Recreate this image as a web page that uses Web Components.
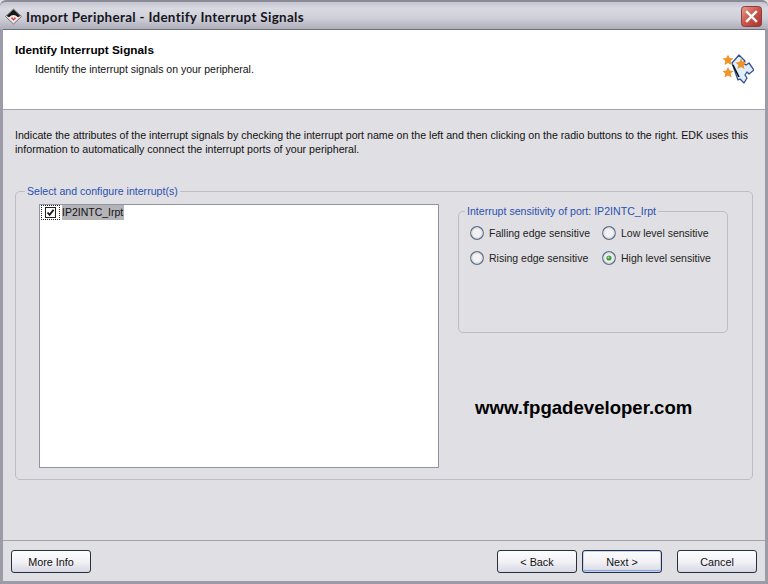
<!DOCTYPE html>
<html>
<head>
<meta charset="utf-8">
<title>Import Peripheral</title>
<style>
  html, body { margin: 0; padding: 0; background: #e0dfe3; }
  body { font: 11px "Liberation Sans", Arial, sans-serif; color: #000; }
</style>
</head>
<body>
<xp-window title="Import Peripheral - Identify Interrupt Signals">
  <wizard-header heading="Identify Interrupt Signals" sub="Identify the interrupt signals on your peripheral."></wizard-header>
  <wizard-body></wizard-body>
  <wizard-footer></wizard-footer>
</xp-window>

<script>
// outer frame + title bar
class XpWindow extends HTMLElement {
  constructor() {
    super();
    this.attachShadow({ mode: 'open' });
  }
  connectedCallback() {
    this.shadowRoot.innerHTML = `
      <style>
        :host {
          display: flex;
          flex-direction: column;
          width: 768px;
          height: 584px;
          box-sizing: border-box;
          overflow: hidden;
          background: #9c9ca8;
          border-radius: 6px 6px 0 0;
        }
        .bar {
          flex: 0 0 29px;
          box-sizing: border-box;
          height: 29px;
          display: flex;
          align-items: center;
          padding: 2px 6px 0 5px;
          border-top: 2px solid #8b8b97;
          background: linear-gradient(#c5c5cf 0%, #d9d9e2 25%, #cfcfd9 60%, #aeaeba 100%);
          border-radius: 6px 6px 0 0;
        }
        .bar svg.logo { flex: none; margin-right: 4px; }
        .title {
          flex: 1;
          font: bold 13.4px "Lato", sans-serif;
          letter-spacing: .32px;
          color: #15151c;
          white-space: nowrap;
        }
        .close {
          flex: none;
          width: 21px;
          height: 21px;
          margin-top: -1px;
        }
        .client {
          flex: 1;
          min-height: 0;
          display: flex;
          flex-direction: column;
          margin: 0 3px 3px 3px;
          background: #e0dfe3;
          border-top: 1px solid #6f6f78;
        }
      </style>
      <div class="bar">
        <svg class="logo" width="17" height="17" viewBox="0 0 16 16">
          <path d="M8 1 15.500 8 8 15 .5 8Z" fill="#f6e8e4" stroke="#5a5a5e" stroke-width=".8"/>
          <path d="M8 1.400 14.400 7.600 12.200 8.600Q8 4.600 3.800 8.600L1.600 7.600Z" fill="#17171a"/>
          <path d="M5.600 9.400Q8 7.400 10.400 9.400L8 12Z" fill="#c8202c"/>
          <circle cx="8" cy="9.200" r="1" fill="#f6e8e4"/>
        </svg>
        <span class="title">${this.getAttribute('title')}</span>
        <svg class="close" viewBox="0 0 21 21">
          <defs>
            <linearGradient id="cl" x1="0" y1="0" x2="1" y2="1">
              <stop offset="0" stop-color="#e8a08e"/>
              <stop offset=".5" stop-color="#c8554a"/>
              <stop offset="1" stop-color="#a8302c"/>
            </linearGradient>
          </defs>
          <rect x=".5" y=".5" width="20" height="20" rx="3" fill="url(#cl)" stroke="#8e3a3e"/>
          <path d="M6 6 15 15M15 6 6 15" stroke="#fff" stroke-width="2.4" stroke-linecap="square"/>
        </svg>
      </div>
      <div class="client"><slot></slot></div>
    `;
  }
}

// white strip on top of the wizard page
class WizardHeader extends HTMLElement {
  constructor() {
    super();
    this.attachShadow({ mode: 'open' });
  }
  connectedCallback() {
    this.shadowRoot.innerHTML = `
      <style>
        :host {
          display: flex;
          flex: 0 0 80px;
          box-sizing: border-box;
          height: 80px;
          background: #fff;
          border-bottom: 1px solid #a4a4a8;
          padding: 13px 12px 0 12px;
          font-family: "Liberation Sans", sans-serif;
        }
        .text { flex: 1; }
        h1 {
          margin: 0;
          font: bold 11.8px/14px "Liberation Sans", sans-serif;
          color: #000;
        }
        p {
          margin: 6px 0 0 20px;
          font-size: 10.5px;
          line-height: 13px;
          color: #111;
        }
        svg { flex: none; margin: 10px -1px 0 0; }
      </style>
      <div class="text">
        <h1>${this.getAttribute('heading')}</h1>
        <p>${this.getAttribute('sub')}</p>
      </div>
      <svg width="33" height="33" viewBox="0 0 33 33">
        <path d="M11 10 18 2 24 8 22 10 25 12 28 10 33 17 28 21 26 19 24 22 26 25 23 30 19 26 17 27Z" fill="#dfeefa" stroke="#34508f" stroke-width="1.300" stroke-linejoin="round"/>
        <path d="M12 12 18 24" stroke="#111" stroke-width="1.600"/>
        <path d="M7 1.500 8.700 5 12.500 5.500 9.700 8 10.500 12 7 10 3.500 12 4.300 8 1.500 5.500 5.300 5Z" fill="#ee9428"/>
        <path d="M20 5.500 21.700 9 25.500 9.500 22.700 12 23.500 16 20 14 16.500 16 17.300 12 14.500 9.500 18.300 9Z" fill="#ee9428"/>
        <path d="M7 14 8.700 17.500 12.500 18 9.700 20.500 10.500 24.500 7 22.500 3.500 24.500 4.300 20.500 1.500 18 5.300 17.500Z" fill="#ee9428"/>
      </svg>
    `;
  }
}

// rounded xp group box, legend sits on the border
class GroupBox extends HTMLElement {
  constructor() {
    super();
    this.attachShadow({ mode: 'open' });
  }
  connectedCallback() {
    const inset = this.getAttribute('inset') || '9';
    this.shadowRoot.innerHTML = `
      <style>
        :host { display: block; box-sizing: border-box; }
        fieldset {
          box-sizing: border-box;
          width: 100%;
          height: 100%;
          margin: 0;
          padding: 0;
          border: 1px solid #bdbcc4;
          border-radius: 5px;
        }
        legend {
          margin-left: ${inset}px;
          padding: 0 2px;
          font: 10.6px/13px "Liberation Sans", sans-serif;
          color: #2a50b0;
          white-space: nowrap;
        }
      </style>
      <fieldset>
        <legend>${this.getAttribute('label')}</legend>
        <slot></slot>
      </fieldset>
    `;
  }
}

class XpRadio extends HTMLElement {
  constructor() {
    super();
    this.attachShadow({ mode: 'open' });
  }
  connectedCallback() {
    const dot = this.hasAttribute('checked')
      ? '<circle cx="7" cy="7" r="2.600" fill="#3f9c3a"/><circle cx="6.500" cy="6.500" r="1" fill="#a6e09a"/>'
      : '';
    this.shadowRoot.innerHTML = `
      <style>
        :host {
          display: flex;
          align-items: center;
          height: 14px;
          font: 10.5px/14px "Liberation Sans", sans-serif;
          color: #222;
          white-space: nowrap;
        }
        svg { flex: none; margin-right: 5px; }
      </style>
      <svg width="14" height="14" viewBox="0 0 14 14">
        <circle cx="7" cy="7" r="6.300" fill="#f2f2f4" stroke="#5c6f85" stroke-width="1.200"/>
        <circle cx="7" cy="7" r="5" fill="none" stroke="#d9d9de" stroke-width="1"/>
        ${dot}
      </svg>
      <span><slot></slot></span>
    `;
  }
}

// one row of the check tree
class CheckItem extends HTMLElement {
  constructor() {
    super();
    this.attachShadow({ mode: 'open' });
  }
  connectedCallback() {
    this.shadowRoot.innerHTML = `
      <style>
        :host {
          display: flex;
          align-items: center;
          height: 15px;
          font: 10.5px/15px "Liberation Sans", sans-serif;
          color: #111;
        }
        .box {
          flex: none;
          width: 19px;
          height: 15px;
          box-sizing: border-box;
          border: 1px dotted #222;
          display: flex;
          align-items: center;
          justify-content: center;
          margin-right: 2px;
        }
        svg { margin-right: 1px; }
        .label { background: #b4b4b8; padding-right: 1px; }
      </style>
      <span class="box">
        <svg width="11" height="11" viewBox="0 0 11 11">
          <rect x=".5" y=".5" width="10" height="10" fill="#fff" stroke="#222"/>
          <path d="M2.500 5.500 4.600 7.800 8.600 2.800" fill="none" stroke="#111" stroke-width="1.800"/>
        </svg>
      </span>
      <span class="label"><slot></slot></span>
    `;
  }
}

class XpButton extends HTMLElement {
  constructor() {
    super();
    this.attachShadow({ mode: 'open' });
  }
  connectedCallback() {
    this.shadowRoot.innerHTML = `
      <style>
        :host {
          display: flex;
          flex: none;
          align-items: center;
          justify-content: center;
          box-sizing: border-box;
          width: 80px;
          height: 23px;
          border: 1px solid #24323f;
          border-radius: 3px;
          background: linear-gradient(#fdfdfe 0%, #f2f2f6 50%, #d6d8e4 100%);
          font: 10.8px/14px "Liberation Sans", sans-serif;
          color: #111;
        }
        :host([default]) {
          box-shadow: inset 0 0 0 1px #c3d3f0, inset 0 -1px 0 1px #8aa6df;
        }
      </style>
      <slot></slot>
    `;
  }
}

class WizardBody extends HTMLElement {
  constructor() {
    super();
    this.attachShadow({ mode: 'open' });
  }
  connectedCallback() {
    this.shadowRoot.innerHTML = `
      <style>
        :host {
          display: flex;
          flex: 1;
          min-height: 0;
          flex-direction: column;
          box-sizing: border-box;
          padding: 18px 12px 0 12px;
          font-family: "Liberation Sans", sans-serif;
        }
        .intro {
          margin: 0 0 29px 0;
          font-size: 10.63px;
          line-height: 14px;
          color: #111;
          white-space: nowrap;
        }
        .outer { height: 295px; }
        .cols {
          display: flex;
          padding: 6px 0 0 23px;
        }
        .list {
          flex: none;
          box-sizing: border-box;
          width: 400px;
          height: 264px;
          background: #fff;
          border: 1px solid #8c95a0;
          padding: 0 0 0 1px;
        }
        .side {
          flex: none;
          margin-left: 19px;
          width: 270px;
        }
        .inner { height: 128px; margin-top: 1px; }
        .radios {
          display: grid;
          grid-template-columns: 132px auto;
          row-gap: 11px;
          padding: 8px 0 0 11px;
        }
        .url {
          margin: 65px 0 0 17px;
          font: bold 18.6px/20px "Liberation Sans", sans-serif;
          color: #000;
          white-space: nowrap;
        }
      </style>
      <p class="intro">Indicate the attributes of the interrupt signals by checking the interrupt port name on the left and then clicking on the radio buttons to the right. EDK uses this<br>information to automatically connect the interrupt ports of your peripheral.</p>
      <group-box class="outer" label="Select and configure interrupt(s)">
        <div class="cols">
          <div class="list"><check-item>IP2INTC_Irpt</check-item></div>
          <div class="side">
            <group-box class="inner" inset="6" label="Interrupt sensitivity of port: IP2INTC_Irpt">
              <div class="radios">
                <xp-radio>Falling edge sensitive</xp-radio>
                <xp-radio>Low level sensitive</xp-radio>
                <xp-radio>Rising edge sensitive</xp-radio>
                <xp-radio checked>High level sensitive</xp-radio>
              </div>
            </group-box>
            <div class="url">www.fpgadeveloper.com</div>
          </div>
        </div>
      </group-box>
    `;
  }
}

class WizardFooter extends HTMLElement {
  constructor() {
    super();
    this.attachShadow({ mode: 'open' });
  }
  connectedCallback() {
    this.shadowRoot.innerHTML = `
      <style>
        :host {
          display: flex;
          flex: 0 0 41px;
          box-sizing: border-box;
          align-items: flex-start;
          gap: 5px;
          padding: 9px 0 0 8px;
          border-top: 1px solid #a4a4a8;
        }
        .spacer { flex: 1; }
        .gap { flex: 0 0 5px; }
        .last { margin-right: 8px; }
      </style>
      <xp-button>More Info</xp-button>
      <span class="spacer"></span>
      <xp-button>&lt; Back</xp-button>
      <xp-button default>Next &gt;</xp-button>
      <span class="gap"></span>
      <xp-button class="last">Cancel</xp-button>
    `;
  }
}

customElements.define('xp-window', XpWindow);
customElements.define('wizard-header', WizardHeader);
customElements.define('group-box', GroupBox);
customElements.define('xp-radio', XpRadio);
customElements.define('check-item', CheckItem);
customElements.define('xp-button', XpButton);
customElements.define('wizard-body', WizardBody);
customElements.define('wizard-footer', WizardFooter);
</script>
</body>
</html>
